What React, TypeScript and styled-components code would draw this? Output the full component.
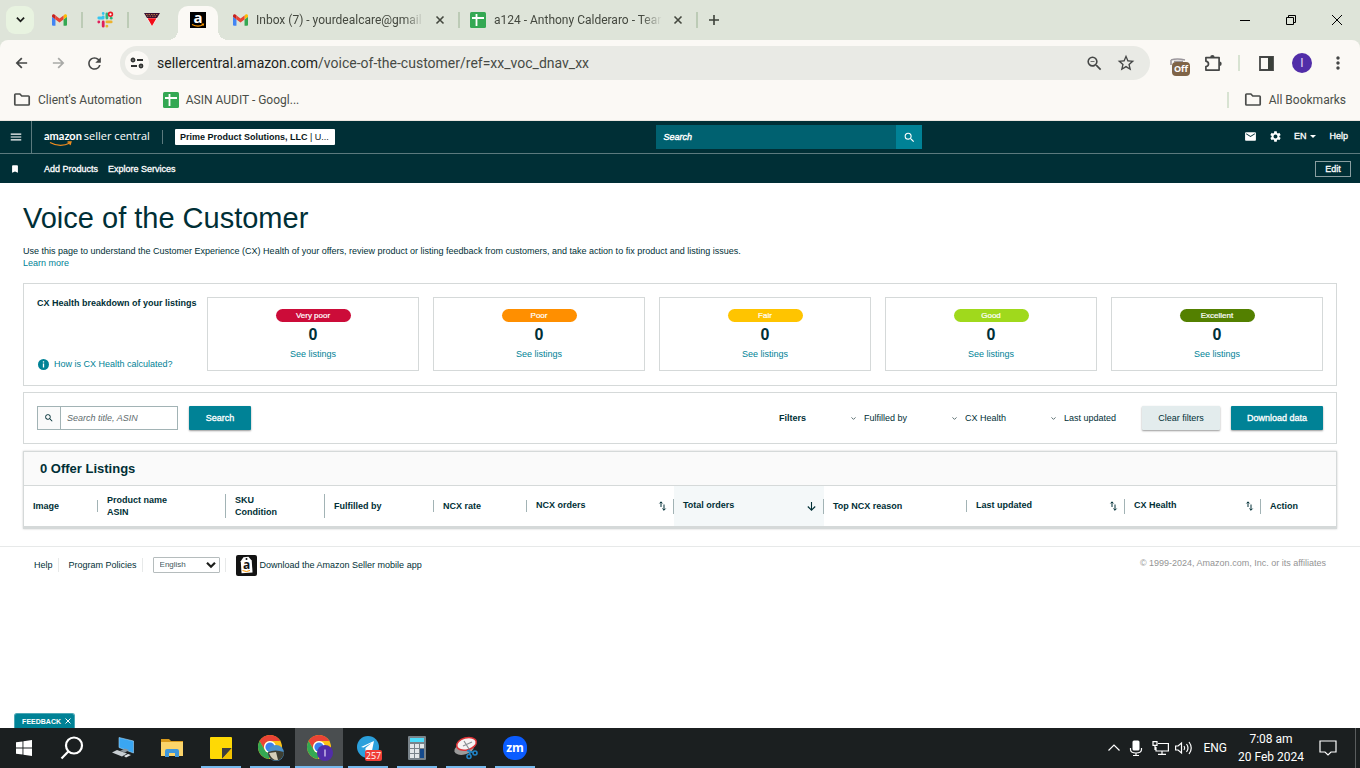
import React from 'react';
import styled, { createGlobalStyle } from 'styled-components';
import {
  MdRefresh,
  MdZoomOut,
  MdStarBorder,
  MdMoreVert,
  MdMenu,
  MdMail,
  MdSettings,
  MdSearch,
  MdBookmark,
} from 'react-icons/md';

const ui = "Roboto, 'Noto Sans', sans-serif";
const rounded = "'Open Sans', 'Noto Sans', sans-serif";
const body = "'Liberation Sans', Arial, sans-serif";
const c = {
  strip: '#dee4d9',
  bar: '#fbf9f5',
  omni: '#e9eae5',
  glyph: '#454746',
  navy: '#002f36',
  teal: '#008296',
  line: '#d5d9d9',
};

const Global = createGlobalStyle`
  *, *::before, *::after { box-sizing: border-box; }
  body { margin: 0; background: #fff; font-family: ${body}; color: ${c.navy}; }
  button, input, select { font: inherit; color: inherit; margin: 0; padding: 0; border: 0; background: none; border-radius: 0; outline: 0; }
  button { cursor: pointer; }
  a { color: inherit; text-decoration: none; }
  svg { display: block; flex: none; overflow: visible; }
  h1, h2, p { margin: 0; }
`;

const Screen = styled.div`
  min-height: 100vh;
  display: flex;
  flex-direction: column;
`;

/* ---------- browser ---------- */
const TabStrip = styled.div`
  height: 40px;
  background: ${c.strip};
  display: flex;
  align-items: center;
  padding-left: 6px;
  font-family: ${ui};
`;
const TabSearch = styled.button`
  width: 28px;
  height: 28px;
  margin-right: 3px;
  border-radius: 9px;
  background: #e8f3e0;
  display: grid;
  place-items: center;
`;
const PinnedTab = styled.button<{ $divided?: boolean }>`
  width: 46px;
  height: 16px;
  display: grid;
  place-items: center;
  border-right: ${p => (p.$divided ? '2px solid #bccbb6' : '0')};
`;
const ActiveTab = styled.button`
  position: relative;
  align-self: flex-end;
  width: 40px;
  height: 34px;
  margin: 0 4px 0 3px;
  padding-bottom: 6px;
  border-radius: 10px 10px 0 0;
  background: ${c.bar};
  display: grid;
  place-items: center;
  &::before, &::after {
    content: '';
    position: absolute;
    bottom: 0;
    width: 10px;
    height: 10px;
  }
  &::before { right: 100%; background: radial-gradient(circle at 0 0, transparent 10px, ${c.bar} 10px); }
  &::after { left: 100%; background: radial-gradient(circle at 100% 0, transparent 10px, ${c.bar} 10px); }
`;
const Tab = styled.div`
  width: 238px;
  height: 16px;
  padding: 0 10px;
  border-right: 2px solid #bccbb6;
  display: flex;
  align-items: center;
  gap: 8px;
  font-size: 12px;
  color: #44483f;
`;
const TabIcon = styled.span`
  width: 16px;
  display: grid;
  place-items: center;
`;
const TabTitle = styled.span`
  flex: 1;
  overflow: hidden;
  white-space: nowrap;
  mask-image: linear-gradient(90deg, #000 88%, transparent);
`;
const IconButton = styled.button<{ $w?: number }>`
  width: ${p => p.$w ?? 28}px;
  height: 28px;
  flex: none;
  display: grid;
  place-items: center;
`;
const TabClose = styled(IconButton)`
  width: 16px;
  height: 16px;
`;
const WindowControls = styled.div`
  margin-left: auto;
  display: flex;
`;

const ToolbarBack = styled.div`
  background: ${c.strip};
`;
const Toolbar = styled.div`
  height: 46px;
  background: ${c.bar};
  border-radius: 8px 8px 0 0;
  padding: 0 8px 0 4px;
  display: flex;
  align-items: center;
  color: ${c.glyph};
`;
const Omnibox = styled.div`
  flex: 1;
  height: 34px;
  margin: 0 10px 0 8px;
  padding: 0 8px 0 5px;
  border-radius: 17px;
  background: ${c.omni};
  display: flex;
  align-items: center;
  font: 14px/20px ${ui};
`;
const SiteInfo = styled.button`
  width: 24px;
  height: 24px;
  margin-right: 8px;
  border-radius: 12px;
  background: ${c.bar};
  display: grid;
  place-items: center;
`;
const Url = styled.span`
  flex: 1;
  color: #474a45;
  b { font-weight: 400; color: #1c1e1b; }
`;
const ExtOff = styled(IconButton)`
  position: relative;
  width: 40px;
`;
const OffBadge = styled.span`
  position: absolute;
  left: 12px;
  top: 13px;
  width: 18px;
  height: 14px;
  border-radius: 4px;
  background: #7f6447;
  color: #fff;
  font: 700 9px/14px ${rounded};
  text-align: center;
`;
const BarRule = styled.i<{ $gap: number }>`
  width: 2px;
  height: 16px;
  margin: 0 ${p => p.$gap}px;
  background: #d8e3d2;
`;
const Avatar = styled.span`
  width: 20px;
  height: 20px;
  border-radius: 50%;
  background: #512da8;
  color: #e4dbf5;
  font: 12px/20px ${ui};
  text-align: center;
`;
const Bookmarks = styled.div`
  height: 35px;
  padding: 0 14px 6px 13px;
  background: ${c.bar};
  border-bottom: 1px solid #ebe6e1;
  display: flex;
  align-items: center;
  font: 12px/16px ${ui};
  color: #4a4e48;
`;
const Bookmark = styled.a`
  display: flex;
  align-items: center;
  gap: 7px;
  margin-right: 21px;
  &:last-child { margin-right: 0; }
`;
const Push = styled.span`
  margin-left: auto;
`;

/* ---------- seller central header ---------- */
const NavTop = styled.header`
  height: 33px;
  background: ${c.navy};
  border-bottom: 1px solid #5c7a7e;
  display: grid;
  grid-template-columns: 3fr 266px 2fr;
  align-items: center;
  color: #fff;
  font-size: 9px;
`;
const NavSide = styled.div<{ $end?: boolean }>`
  height: 32px;
  display: flex;
  align-items: center;
  justify-content: ${p => (p.$end ? 'flex-end' : 'flex-start')};
  padding: ${p => (p.$end ? '0 12px 2px 0' : '0')};
`;
const Hamburger = styled.button`
  width: 32px;
  height: 32px;
  border-right: 1px solid #5c7a7e;
  display: grid;
  place-items: center;
`;
const Logo = styled.a`
  margin-left: 12px;
  display: block;
`;
const LogoText = styled.text`
  font-family: ${rounded};
  font-size: 11px;
  fill: #fff;
`;
const LogoBrand = styled.tspan`
  font-family: Lato, sans-serif;
  font-weight: 700;
`;
const NavRule = styled.i`
  width: 1px;
  height: 14px;
  margin: 0 12px;
  background: #5c7a7e;
`;
const Account = styled.button`
  width: 160px;
  height: 16px;
  padding: 0 5px;
  border-radius: 1px;
  background: #fff;
  color: #0a1518;
  font-size: 9px;
  line-height: 16px;
  text-align: left;
  white-space: nowrap;
`;
const NavSearch = styled.form`
  height: 24px;
  display: flex;
  background: #006170;
  input {
    flex: 1;
    min-width: 0;
    padding: 0 7px;
    font: italic 400 9px ${body};
  }
  input::placeholder { color: #fff; opacity: 1; -webkit-text-stroke: 0.4px; }
  button {
    width: 26px;
    background: ${c.teal};
    display: grid;
    place-items: center;
  }
`;
const NavItem = styled.button<{ $ml?: number }>`
  margin-left: ${p => p.$ml ?? 12}px;
  display: flex;
  align-items: center;
  gap: 4px;
  font-size: 9px;
  -webkit-text-stroke: 0.3px;
`;
const NavSub = styled.nav`
  height: 29px;
  padding: 0 9px 0 10px;
  background: ${c.navy};
  color: #fff;
  display: flex;
  align-items: center;
  font-size: 9px;
  -webkit-text-stroke: 0.3px;
  a { margin-right: 10px; }
`;
const SavedIcon = styled.span`
  width: 34px;
`;
const EditButton = styled.button`
  margin-left: auto;
  width: 36px;
  height: 16px;
  border: 1px solid #8a9ea1;
`;

/* ---------- page ---------- */
const Main = styled.main`
  padding: 18px 23px 17px;
  font-size: 9px;
  line-height: 12px;
`;
const Title = styled.h1`
  font-size: 29px;
  line-height: 34px;
  font-weight: 400;
`;
const Intro = styled.p`
  margin: 10px 0 14px;
`;
const TextLink = styled.a`
  color: ${c.teal};
`;
const Card = styled.section`
  border: 1px solid ${c.line};
  padding: 13px;
  margin-bottom: 6px;
  display: flex;
`;
const Breakdown = styled.div`
  width: 170px;
  flex: none;
  padding-bottom: 2px;
  display: flex;
  flex-direction: column;
  justify-content: space-between;
`;
const Strong = styled.strong`
  font-weight: 700;
`;
const InfoLink = styled(TextLink)`
  display: flex;
  align-items: center;
  gap: 5px;
  padding-left: 1px;
`;
const Ratings = styled.div`
  flex: 1;
  display: grid;
  grid-template-columns: repeat(5, 1fr);
  gap: 14px;
  margin-bottom: 1px;
`;
const Rating = styled.div`
  height: 74px;
  padding-top: 11px;
  border: 1px solid ${c.line};
  display: flex;
  flex-direction: column;
  align-items: center;
`;
const Pill = styled.span<{ $bg: string }>`
  width: 75px;
  height: 13px;
  border-radius: 7px;
  background: ${p => p.$bg};
  color: #fff;
  font-size: 8px;
  line-height: 13px;
  text-align: center;
  -webkit-text-stroke: 0.2px;
`;
const Count = styled.span`
  margin: 4px 0;
  font-size: 16px;
  line-height: 18px;
  font-weight: 700;
`;
const FilterCard = styled(Card)`
  align-items: center;
`;
const SearchBox = styled.label`
  width: 141px;
  height: 24px;
  margin-right: 11px;
  border: 1px solid #a2b3b5;
  display: flex;
  align-items: center;
  span {
    width: 23px;
    height: 22px;
    background: #fafafa;
    border-right: 1px solid #a2b3b5;
    display: grid;
    place-items: center;
  }
  input { flex: 1; min-width: 0; padding: 0 6px; font-style: italic; }
  input::placeholder { color: #5e6b6d; opacity: 1; }
`;
const Action = styled.button<{ $w: number; $quiet?: boolean }>`
  width: ${p => p.$w}px;
  height: 24px;
  background: ${p => (p.$quiet ? '#e3eced' : c.teal)};
  color: ${p => (p.$quiet ? c.navy : '#fff')};
  border-radius: 1px;
  box-shadow: 0 1px 2px rgba(0, 0, 0, 0.4);
  -webkit-text-stroke: ${p => (p.$quiet ? '0' : '0.3px')};
`;
const Filters = styled.div`
  flex: 1;
  display: flex;
  align-items: center;
  justify-content: flex-end;
  ${Action} { margin-left: 11px; }
`;
const FilterSelect = styled.label<{ $w: number }>`
  width: ${p => p.$w}px;
  display: flex;
  align-items: center;
  gap: 8px;
  select { flex: 1; min-width: 0; appearance: none; }
`;
const FiltersLabel = styled(Strong)`
  width: 72px;
`;
const Listings = styled.section`
  margin-top: 7px;
  border: 1px solid ${c.line};
  border-bottom-width: 3px;
  box-shadow: 0 0 2px rgba(0, 0, 0, 0.2);
`;
const ListingsTitle = styled.h2`
  height: 34px;
  padding-left: 16px;
  background: #fafafa;
  border-bottom: 1px solid ${c.line};
  font-size: 13px;
  line-height: 33px;
`;
const Table = styled.table`
  width: 100%;
  table-layout: fixed;
  border-collapse: collapse;
`;
const Th = styled.th<{ $active?: boolean }>`
  height: 40px;
  padding: 0;
  text-align: left;
  vertical-align: middle;
  background: ${p => (p.$active ? '#f4f8f9' : 'transparent')};
`;
const ThBody = styled.div<{ $sort?: boolean; $last?: boolean }>`
  height: ${p => (p.$sort ? '15px' : 'auto')};
  padding: 0 7px 0 9px;
  border-right: ${p => (p.$last ? '0' : '1px solid #a2b3b5')};
  display: flex;
  justify-content: space-between;
  white-space: pre-line;
`;
const SortButton = styled.button`
  align-self: center;
`;

const Footer = styled.footer`
  border-top: 1px solid #e7e9e9;
  padding: 10px 34px 7px;
  display: flex;
  align-items: center;
  font-size: 9px;
  line-height: 12px;
`;
const FooterItem = styled.div<{ $ruled?: boolean }>`
  height: 14px;
  margin-right: 10px;
  padding-right: ${p => (p.$ruled ? 5 : 0)}px;
  border-right: ${p => (p.$ruled ? '1px solid #e7e9e9' : '0')};
  display: flex;
  align-items: center;
  gap: 3px;
`;
const Language = styled.label`
  position: relative;
  select {
    width: 67px;
    height: 16px;
    padding-left: 6px;
    border: 1px solid #b5bcbd;
    border-radius: 1px;
    background: #fff;
    font-size: 8px;
    color: #44595c;
    appearance: none;
  }
  svg { position: absolute; right: 4px; top: 5px; pointer-events: none; }
`;
const Copyright = styled.span`
  margin: 0 0 4px auto;
  color: #949494;
`;
const Spacer = styled.div`
  flex: 1;
  display: flex;
  align-items: flex-end;
  padding-left: 14px;
`;
const Feedback = styled.button`
  width: 61px;
  height: 15px;
  padding-right: 3px;
  border: 1px solid #4ba7b5;
  border-bottom: 0;
  border-radius: 3px 3px 0 0;
  background: ${c.teal};
  color: #fff;
  font-size: 7px;
  font-weight: 700;
  display: flex;
  align-items: center;
  justify-content: flex-end;
  gap: 4px;
`;

/* ---------- task bar ---------- */
const TaskBar = styled.div`
  height: 40px;
  background: #1b1f20;
  color: #fff;
  display: flex;
  font-family: ${ui};
  font-size: 12px;
`;
const Apps = styled.div`
  display: flex;
  gap: 1px;
  margin-left: 3px;
`;
const Task = styled.button<{ $open?: boolean; $active?: boolean }>`
  position: relative;
  width: 48px;
  height: 40px;
  display: grid;
  place-items: center;
  background: ${p => (p.$active ? '#4a4e50' : 'transparent')};
  &::after {
    content: '';
    position: absolute;
    bottom: 0;
    left: ${p => (p.$active ? 0 : 4)}px;
    right: ${p => (p.$active ? 0 : 4)}px;
    height: ${p => (p.$open || p.$active ? 2 : 0)}px;
    background: #76b9ed;
  }
`;
const Tray = styled.div`
  margin-left: auto;
  display: flex;
  align-items: center;
  gap: 6px;
`;
const InputLanguage = styled.span`
  margin-left: 4px;
`;
const Clock = styled.div`
  width: 76px;
  margin-right: 4px;
  line-height: 18px;
  text-align: center;
  white-space: nowrap;
`;
const ShowDesktop = styled.button`
  width: 5px;
  height: 40px;
  margin-left: 12px;
  border-left: 1px solid #5a5d5e;
`;

/* ---------- drawings ---------- */
const Gmail = () => (
  <svg width="15" height="12" viewBox="0 0 52 40">
    <path d="M3.500 40H12V18L0 9v27.500A3.500 3.500 0 0 0 3.500 40z" fill="#4285f4" />
    <path d="M40 40h8.500a3.500 3.500 0 0 0 3.500-3.500V9L40 18z" fill="#34a853" />
    <path d="M40 4v14l12-9V5c0-4.500-5-6.800-8.500-4.200z" fill="#fbbc04" />
    <path d="M12 18V4l14 10.500L40 4v14L26 28.500z" fill="#ea4335" />
    <path d="M0 5v4l12 9V4L8.500.8C5-1.800 0 .5 0 5z" fill="#c5221f" />
  </svg>
);
const Slack = () => (
  <svg width="16" height="16" viewBox="0 0 16 16" strokeWidth="2.800" strokeLinecap="round">
    <path d="M6.200 1.500v.1M6.200 6H1.800M6.200 5V4.800" stroke="#36c5f0" />
    <path d="M9.900 2v4" stroke="#2eb67d" />
    <path d="M1.800 9.900v.1M6.200 9.900v4.300" stroke="#e01e5a" />
    <path d="M9.900 9.900h4.300M9.900 14.200v-.1" stroke="#ecb22e" />
    <path d="M14.200 6.200v-.1" stroke="#2eb67d" />
    <circle cx="13.500" cy="2.300" r="1.900" fill="#fff" stroke="#eb1c26" strokeWidth="1.600" />
  </svg>
);
const Triangle = () => (
  <svg width="16" height="14" viewBox="0 0 16 14">
    <path d="M0 0h16l-3 5h-10z" fill="#3a1030" />
    <path d="M2 1.500h12M3 3.200h10" stroke="#d08a4a" strokeWidth=".8" strokeDasharray="1.500 1" />
    <path d="M2.500 5h11L8 13.500z" fill="#fff" />
    <path d="M3.500 5.200h9L8 13z" fill="#f20d18" />
  </svg>
);
const AmazonIcon = () => (
  <svg width="16" height="16" viewBox="0 0 16 16">
    <rect width="16" height="16" fill="#000" />
    <text x="8" y="11" textAnchor="middle" fontFamily={rounded} fontWeight="700" fontSize="15" fill="#fff">a</text>
    <path d="M2 12.500q6 3 11 .3M11.500 12h2l-.3 1.700" fill="none" stroke="#f90" strokeWidth="1.100" />
  </svg>
);
const Sheets = () => (
  <svg width="16" height="16" viewBox="0 0 16 16">
    <rect width="16" height="16" rx="1.500" fill="#34a853" />
    <path d="M2 6h12M6.500 2v12" stroke="#fff" strokeWidth="1.800" />
  </svg>
);
const Folder = () => (
  <svg width="18" height="16" viewBox="0 0 18 16" fill="none" stroke="#4a4c4a" strokeWidth="1.700">
    <path d="M2.600 2h4.300l1.900 2h6.600q.8 0 .8.800v7.400q0 .8-.8.800H2.600q-.8 0-.8-.8V2.800q0-.8.800-.8z" />
  </svg>
);
const Arrow = ({ flip, color }: { flip?: boolean; color: string }) => (
  <svg width="12" height="12" viewBox="0 0 14 14" fill="none" stroke={color} strokeWidth="2">
    <path d={flip ? 'M1 7h11.500M7.200 1.200L13 7l-5.800 5.800' : 'M13 7H1.500M6.800 1.200L1 7l5.800 5.800'} />
  </svg>
);
const Puzzle = () => (
  <svg width="18" height="18" viewBox="0 0 18 18">
    <path
      d="M1.900 3.600h13.200v12.500H1.900v-3.600q2.600-.4 2.600-2.600T1.900 7.200z"
      fill="none"
      stroke="#454746"
      strokeWidth="1.700"
      strokeLinejoin="round"
    />
    <path d="M6.200 3.200a2.200 2.200 0 0 1 4.400 0zM15.500 7.600a2.200 2.200 0 0 1 0 4.400z" fill="#454746" />
  </svg>
);
const Cross = ({ s, w = 1.6 }: { s: number; w?: number }) => (
  <svg width={s} height={s} viewBox={`0 0 ${s} ${s}`} stroke="currentColor" strokeWidth={w}>
    <path d={`M.5 .5L${s - 0.5} ${s - 0.5}M${s - 0.5} .5L.5 ${s - 0.5}`} />
  </svg>
);
const SiteIcon = () => (
  <svg width="14" height="12" viewBox="0 0 14 12" fill="none" stroke="#303230" strokeWidth="1.800">
    <circle cx="3" cy="3" r="1.500" />
    <path d="M7 3h6M1 9h6" />
    <circle cx="11" cy="9" r="1.500" />
  </svg>
);
const Chevron = ({ w = 10, s = 2, color = '#1c1e1b' }: { w?: number; s?: number; color?: string }) => (
  <svg width={w} height={w * 0.6} viewBox="0 0 10 6" fill="none" stroke={color} strokeWidth={s}>
    <path d="M1 .8l4 4 4-4" />
  </svg>
);
const Info = () => (
  <svg width="11" height="11" viewBox="0 0 11 11">
    <circle cx="5.500" cy="5.500" r="5.500" fill={c.teal} />
    <path d="M5.500 2.200v1.400M5.500 4.600v4" stroke="#fff" strokeWidth="1.300" />
  </svg>
);
const SortIcon = () => (
  <svg width="7" height="10" viewBox="0 0 7 10" fill="none" stroke={c.navy} strokeWidth="1">
    <path d="M2 6V.8M.5 2.400L2 .9l1.500 1.500M5 3.500v5.800M3.400 7.600L5 9.200l1.600-1.600" />
  </svg>
);
const DownArrow = () => (
  <svg width="9" height="9" viewBox="0 0 9 9" fill="none" stroke={c.navy} strokeWidth="1.100">
    <path d="M4.500 0v8M.8 4.500l3.700 3.700L8.200 4.500" />
  </svg>
);
const SellerApp = () => (
  <svg width="21" height="21" viewBox="0 0 21 21">
    <rect width="21" height="21" rx="2" fill="#131313" />
    <path d="M5 6l3-4h5l3 4v12H5z" fill="#fff" transform="rotate(-4 10 10)" />
    <circle cx="10.500" cy="4" r="1" fill="#131313" />
    <text x="10.500" y="14" textAnchor="middle" fontFamily={rounded} fontWeight="700" fontSize="12" fill="#131313">a</text>
    <path d="M6.500 15.500q4 2 7.500 0" fill="none" stroke="#f90" />
  </svg>
);
const ChromeIcon = ({ children }: { children: React.ReactNode }) => (
  <svg width="28" height="28" viewBox="-1 0 28 28">
    <circle cx="13" cy="13" r="12" fill="#fbc116" />
    <path d="M2.600 7A12 12 0 0 1 23.400 7H13a6 6 0 0 0-5.200 9z" fill="#ea4335" />
    <path d="M2.600 7l5.200 9A6 6 0 0 0 13 19l-1 6A12 12 0 0 1 2.600 7z" fill="#34a853" />
    <circle cx="13" cy="13" r="6" fill="#fff" />
    <circle cx="13" cy="13" r="4.600" fill="#3b80ee" />
    {children}
  </svg>
);

const Start = () => (
  <svg width="16" height="16" viewBox="0 0 16 16" fill="#fff">
    <path d="M0 2.300l6.500-.9v6.200H0zM7.400 1.300L16 0v7.600H7.400zM0 8.400h6.500v6.200L0 13.700zM7.400 8.400H16V16l-8.600-1.200z" />
  </svg>
);
const Find = () => (
  <svg width="24" height="24" viewBox="0 0 24 24" fill="none" stroke="#fff" strokeWidth="2.200">
    <circle cx="14" cy="9.500" r="8" />
    <path d="M8.300 15.500L1.500 22.500" />
  </svg>
);
const Computer = () => (
  <svg width="24" height="24" viewBox="0 0 24 24">
    <path d="M8 1.500l14.500 3.500v12L8 11.500z" fill="#3aa6f2" stroke="#9fd6fb" strokeWidth=".6" />
    <path d="M9 15l5-2.500 4 1.500-4 2.500z" fill="#8b959c" />
    <path d="M1 16.500l5-2.500 10 3.500-5 3z" fill="#c8ced2" />
    <path d="M13 20l4-2 3 1-5 2.500z" fill="#dfe3e5" />
  </svg>
);
const Explorer = () => (
  <svg width="22" height="20" viewBox="0 0 22 20">
    <path d="M0 1h8l2 2h12v4H0z" fill="#d99a1c" />
    <rect y="4" width="22" height="14" fill="#fbd46a" />
    <path d="M4 19v-6q0-2 2-2h10q2 0 2 2v6h-4v-4H8v4z" fill="#3e97dc" />
  </svg>
);
const Sticky = () => (
  <svg width="22" height="22" viewBox="0 0 22 22">
    <rect width="22" height="22" rx="1" fill="#fed905" />
    <path d="M12 22V11h10z" fill="#3e3e3e" />
    <path d="M12 22L22 11v11z" fill="#f2c200" />
  </svg>
);
const Telegram = () => (
  <svg width="28" height="28" viewBox="-1 0 28 28">
    <circle cx="13" cy="13" r="11" fill="#2ba0dc" />
    <path d="M6 13l13-6-2.500 12-4-3-2 2v-4l6-5-8 4.500z" fill="#fff" />
    <rect x="10" y="16" width="17" height="11" rx="2" fill="#f03e37" />
    <text x="18.500" y="25" textAnchor="middle" fontFamily={rounded} fontSize="9" fill="#fff">257</text>
  </svg>
);
const Calculator = () => (
  <svg width="18" height="24" viewBox="0 0 18 24">
    <rect width="18" height="24" rx="1" fill="#79838a" />
    <rect x="2" y="2" width="14" height="4" fill="#4cdcfb" />
    <path d="M2 8h4v4H2zM7 8h4v4H7zM12 8h4v4h-4zM2 13h4v4H2zM7 13h4v4H7zM2 18h4v4H2zM7 18h4v4H7z" fill="#e3e7e9" />
    <rect x="12" y="13" width="4" height="9" fill="#154a8c" />
  </svg>
);
const Snip = () => (
  <svg width="26" height="24" viewBox="0 0 26 24">
    <ellipse cx="11" cy="13" rx="10" ry="5.500" fill="#9b9b9b" transform="rotate(-15 11 13)" />
    <ellipse cx="13.500" cy="8" rx="10" ry="6" fill="#f6f4f4" stroke="#dd3337" strokeWidth="1.500" transform="rotate(-15 13 8)" />
    <path d="M11 5l5 8M10 10l9-4" stroke="#8b9094" strokeWidth="1.200" />
    <g fill="none" stroke="#2184c7" strokeWidth="1.600">
      <circle cx="16" cy="20.500" r="2" />
      <circle cx="22" cy="17" r="2" />
      <path d="M17 18.500l-1-5M20 16.500l-6-2" />
    </g>
  </svg>
);
const Zoom = () => (
  <svg width="24" height="24" viewBox="0 0 24 24">
    <rect width="24" height="24" rx="11" fill="#0b5cff" />
    <text x="12" y="16" textAnchor="middle" fontFamily={rounded} fontWeight="700" fontSize="12" fill="#fff">zm</text>
  </svg>
);
const outline = { fill: 'none', stroke: '#fff', strokeWidth: 1.2 };

const ratings: [string, string][] = [
  ['Very poor', '#cc0c39'],
  ['Poor', '#ff8f00'],
  ['Fair', '#ffc400'],
  ['Good', '#a0d91c'],
  ['Excellent', '#538000'],
];
type Col = { t: string; w: number; sort?: 'both' | 'down' };
const columns: Col[] = [
  { t: 'Image', w: 74 },
  { t: 'Product name\nASIN', w: 128 },
  { t: 'SKU\nCondition', w: 99 },
  { t: 'Fulfilled by', w: 109 },
  { t: 'NCX rate', w: 93 },
  { t: 'NCX orders', w: 147, sort: 'both' },
  { t: 'Total orders', w: 150, sort: 'down' },
  { t: 'Top NCX reason', w: 143 },
  { t: 'Last updated', w: 158, sort: 'both' },
  { t: 'CX Health', w: 136, sort: 'both' },
  { t: 'Action', w: 75 },
];

export default function App() {
  return (
    <Screen>
      <Global />
      <TabStrip>
        <TabSearch aria-label="Search tabs"><Chevron w={9} /></TabSearch>
        <PinnedTab $divided aria-label="Gmail"><Gmail /></PinnedTab>
        <PinnedTab $divided aria-label="Slack"><Slack /></PinnedTab>
        <PinnedTab aria-label="Pinned site"><Triangle /></PinnedTab>
        <ActiveTab aria-label="Amazon"><AmazonIcon /></ActiveTab>
        <Tab>
          <TabIcon><Gmail /></TabIcon>
          <TabTitle>Inbox (7) - yourdealcare@gmail</TabTitle>
          <TabClose aria-label="Close tab"><Cross s={8} /></TabClose>
        </Tab>
        <Tab>
          <TabIcon><Sheets /></TabIcon>
          <TabTitle>a124 - Anthony Calderaro - Tear</TabTitle>
          <TabClose aria-label="Close tab"><Cross s={8} /></TabClose>
        </Tab>
        <IconButton $w={32} aria-label="New tab">
          <svg width="10" height="10" viewBox="0 0 10 10"><path d="M5 0v10M0 5h10" stroke="#3b4038" strokeWidth="1.600" /></svg>
        </IconButton>
        <WindowControls>
          <IconButton $w={46} aria-label="Minimize">
            <svg width="10" height="10"><path d="M0 5.500h10" stroke="#000" /></svg>
          </IconButton>
          <IconButton $w={46} aria-label="Restore">
            <svg width="10" height="10" fill="none" stroke="#000"><path d="M.5 2.500h7v7h-7zM2.500 2.500v-2h7v7h-2" /></svg>
          </IconButton>
          <IconButton $w={46} aria-label="Close">
            <svg width="10" height="10" stroke="#000"><path d="M0 0l10 10M10 0L0 10" /></svg>
          </IconButton>
        </WindowControls>
      </TabStrip>
      <ToolbarBack>
        <Toolbar>
          <IconButton $w={36} aria-label="Back"><Arrow color="#454746" /></IconButton>
          <IconButton $w={36} aria-label="Forward"><Arrow flip color="#a9aaa7" /></IconButton>
          <IconButton $w={36} aria-label="Reload"><MdRefresh size={19} /></IconButton>
          <Omnibox>
            <SiteInfo aria-label="Site information"><SiteIcon /></SiteInfo>
            <Url><b>sellercentral.amazon.com</b>/voice-of-the-customer/ref=xx_voc_dnav_xx</Url>
            <IconButton $w={32} aria-label="Zoom"><MdZoomOut size={19} /></IconButton>
            <IconButton $w={32} aria-label="Bookmark"><MdStarBorder size={20} /></IconButton>
          </Omnibox>
          <ExtOff aria-label="Extension off">
            <svg width="20" height="12" viewBox="0 0 20 12" fill="none">
              <path d="M1 3q6-2 14 0M1 3v5M4 4.500h9" stroke="#9b979c" strokeWidth="1.600" />
            </svg>
            <OffBadge>Off</OffBadge>
          </ExtOff>
          <IconButton $w={26} aria-label="Extensions"><Puzzle /></IconButton>
          <BarRule $gap={12} />
          <IconButton $w={28} aria-label="Side panel">
            <svg width="15" height="15" viewBox="0 0 15 15">
              <path d="M1 1h13v13H1z" fill="none" stroke="#454746" strokeWidth="1.800" />
              <path d="M9 1h5v13H9z" fill="#3a403a" />
            </svg>
          </IconButton>
          <IconButton $w={44} aria-label="Profile"><Avatar>I</Avatar></IconButton>
          <IconButton $w={28} aria-label="Menu"><MdMoreVert size={20} /></IconButton>
        </Toolbar>
      </ToolbarBack>
      <Bookmarks>
        <Bookmark href="#"><Folder />Client's Automation</Bookmark>
        <Bookmark href="#"><Sheets />ASIN AUDIT - Googl...</Bookmark>
        <Push />
        <BarRule $gap={15} />
        <Bookmark href="#"><Folder />All Bookmarks</Bookmark>
      </Bookmarks>

      <NavTop>
        <NavSide>
          <Hamburger aria-label="Menu"><MdMenu size={14} /></Hamburger>
          <Logo href="#" aria-label="amazon seller central">
            <svg width="106" height="22" viewBox="0 0 106 22">
              <LogoText x="0" y="14"><LogoBrand>amazon</LogoBrand><tspan dx="2">seller central</tspan></LogoText>
              <path d="M6 16.500q10 5.500 20 .5M23.500 16h3.500l-1 3" fill="none" stroke="#f08c1e" strokeWidth="1.300" />
            </svg>
          </Logo>
          <NavRule />
          <Account><b>Prime Product Solutions, LLC</b> | U...</Account>
        </NavSide>
        <NavSearch>
          <input aria-label="Search" placeholder="Search" />
          <button type="button" aria-label="Submit search"><MdSearch size={13} /></button>
        </NavSearch>
        <NavSide $end>
          <NavItem aria-label="Messages"><MdMail size={13} /></NavItem>
          <NavItem aria-label="Settings"><MdSettings size={13} /></NavItem>
          <NavItem>EN<svg width="6" height="3"><path d="M0 0h6L3 3z" fill="#fff" /></svg></NavItem>
          <NavItem $ml={13}>Help</NavItem>
        </NavSide>
      </NavTop>
      <NavSub>
        <SavedIcon><MdBookmark size={10} /></SavedIcon>
        <a href="#">Add Products</a>
        <a href="#">Explore Services</a>
        <EditButton>Edit</EditButton>
      </NavSub>

      <Main>
        <Title>Voice of the Customer</Title>
        <Intro>
          Use this page to understand the Customer Experience (CX) Health of your offers, review product or listing
          feedback from customers, and take action to fix product and listing issues.
          <br />
          <TextLink href="#">Learn more</TextLink>
        </Intro>
        <Card>
          <Breakdown>
            <Strong>CX Health breakdown of your listings</Strong>
            <InfoLink href="#"><Info />How is CX Health calculated?</InfoLink>
          </Breakdown>
          <Ratings>
            {ratings.map(([name, bg]) => (
              <Rating key={name}>
                <Pill $bg={bg}>{name}</Pill>
                <Count>0</Count>
                <TextLink href="#">See listings</TextLink>
              </Rating>
            ))}
          </Ratings>
        </Card>
        <FilterCard>
          <SearchBox>
            <span><MdSearch size={10} /></span>
            <input aria-label="Search title, ASIN" placeholder="Search title, ASIN" />
          </SearchBox>
          <Action $w={62}>Search</Action>
          <Filters>
            <FiltersLabel>Filters</FiltersLabel>
            <FilterSelect $w={101}>
              <Chevron w={5} color="#5e7073" />
              <select aria-label="Fulfilled by"><option>Fulfilled by</option></select>
            </FilterSelect>
            <FilterSelect $w={99}>
              <Chevron w={5} color="#5e7073" />
              <select aria-label="CX Health"><option>CX Health</option></select>
            </FilterSelect>
            <FilterSelect $w={80}>
              <Chevron w={5} color="#5e7073" />
              <select aria-label="Last updated"><option>Last updated</option></select>
            </FilterSelect>
            <Action $w={78} $quiet>Clear filters</Action>
            <Action $w={92}>Download data</Action>
          </Filters>
        </FilterCard>
        <Listings>
          <ListingsTitle>0 Offer Listings</ListingsTitle>
          <Table>
            <colgroup>
              {columns.map(col => <col key={col.t} width={col.w} />)}
            </colgroup>
            <thead>
              <tr>
                {columns.map((col, i) => (
                  <Th key={col.t} $active={col.sort === 'down'}>
                    <ThBody $sort={!!col.sort} $last={i === columns.length - 1}>
                      {col.t}
                      {col.sort && (
                        <SortButton aria-label={'Sort by ' + col.t}>
                          {col.sort === 'both' ? <SortIcon /> : <DownArrow />}
                        </SortButton>
                      )}
                    </ThBody>
                  </Th>
                ))}
              </tr>
            </thead>
          </Table>
        </Listings>
      </Main>

      <Footer>
        <FooterItem $ruled><a href="#">Help</a></FooterItem>
        <FooterItem $ruled><a href="#">Program Policies</a></FooterItem>
        <FooterItem $ruled>
          <Language>
            <select aria-label="Language"><option>English</option></select>
            <Chevron w={10} s={2.2} />
          </Language>
        </FooterItem>
        <FooterItem><SellerApp /><a href="#">Download the Amazon Seller mobile app</a></FooterItem>
        <Copyright>© 1999-2024, Amazon.com, Inc. or its affiliates</Copyright>
      </Footer>
      <Spacer>
        <Feedback>FEEDBACK <Cross s={6} w={1} /></Feedback>
      </Spacer>

      <TaskBar>
        <Task aria-label="Start"><Start /></Task>
        <Task aria-label="Search"><Find /></Task>
        <Apps>
          <Task aria-label="This PC"><Computer /></Task>
          <Task aria-label="File Explorer"><Explorer /></Task>
          <Task aria-label="Sticky Notes" $open><Sticky /></Task>
          <Task aria-label="Chrome" $open>
            <ChromeIcon>
              <circle cx="19" cy="19" r="8" fill="#4a90c9" />
              <path d="M11.200 18q7-3 15.600 0a8 8 0 0 1-15.600 3z" fill="#3d3f32" />
              <path d="M12 19l7-1 2 8q-6 1-9-7z" fill="#d4cfb8" />
            </ChromeIcon>
          </Task>
          <Task aria-label="Chrome profile I" $active>
            <ChromeIcon>
              <circle cx="19" cy="19" r="8" fill="#512da8" />
              <path d="M19 15.500v7" stroke="#d9cdf2" strokeWidth="1.300" />
            </ChromeIcon>
          </Task>
          <Task aria-label="Telegram" $open><Telegram /></Task>
          <Task aria-label="Calculator" $open><Calculator /></Task>
          <Task aria-label="Snipping Tool" $open><Snip /></Task>
          <Task aria-label="Zoom" $open><Zoom /></Task>
        </Apps>
        <Tray>
          <svg width="12" height="8" viewBox="0 0 12 8" {...outline}><path d="M.5 6.500L6 1l5.500 5.500" /></svg>
          <svg width="20" height="16" viewBox="0 0 20 16" {...outline}>
            <rect x="6.500" y=".5" width="7" height="10" rx="1.500" fill="#fff" stroke="none" />
            <path d="M4.500 8v1.500Q4.500 13 10 13t5.500-3.500V8M10 13v2.500M7 15.500h6" />
          </svg>
          <svg width="17" height="14" viewBox="0 0 17 14" {...outline}>
            <path d="M6 2.500h10.400v7.500H4V6M10 10v3M6 13.400h8M1 .6h4v3.800H1zM3 4.500V9" />
          </svg>
          <svg width="18" height="14" viewBox="0 0 18 14" {...outline}>
            <path d="M.6 5v4h2.500L6.500 12V2L3.100 5zM9 5q1.500 2 0 4M11.500 3q3 4 0 8M14 1q4.500 6 0 12" />
          </svg>
          <InputLanguage>ENG</InputLanguage>
          <Clock>7:08 am<br />20 Feb 2024</Clock>
          <svg width="18" height="16" viewBox="0 0 18 16" {...outline}>
            <path d="M1 1h16v11h-5l-3 3-3-3H1z" />
          </svg>
          <ShowDesktop aria-label="Show desktop" />
        </Tray>
      </TaskBar>
    </Screen>
  );
}
